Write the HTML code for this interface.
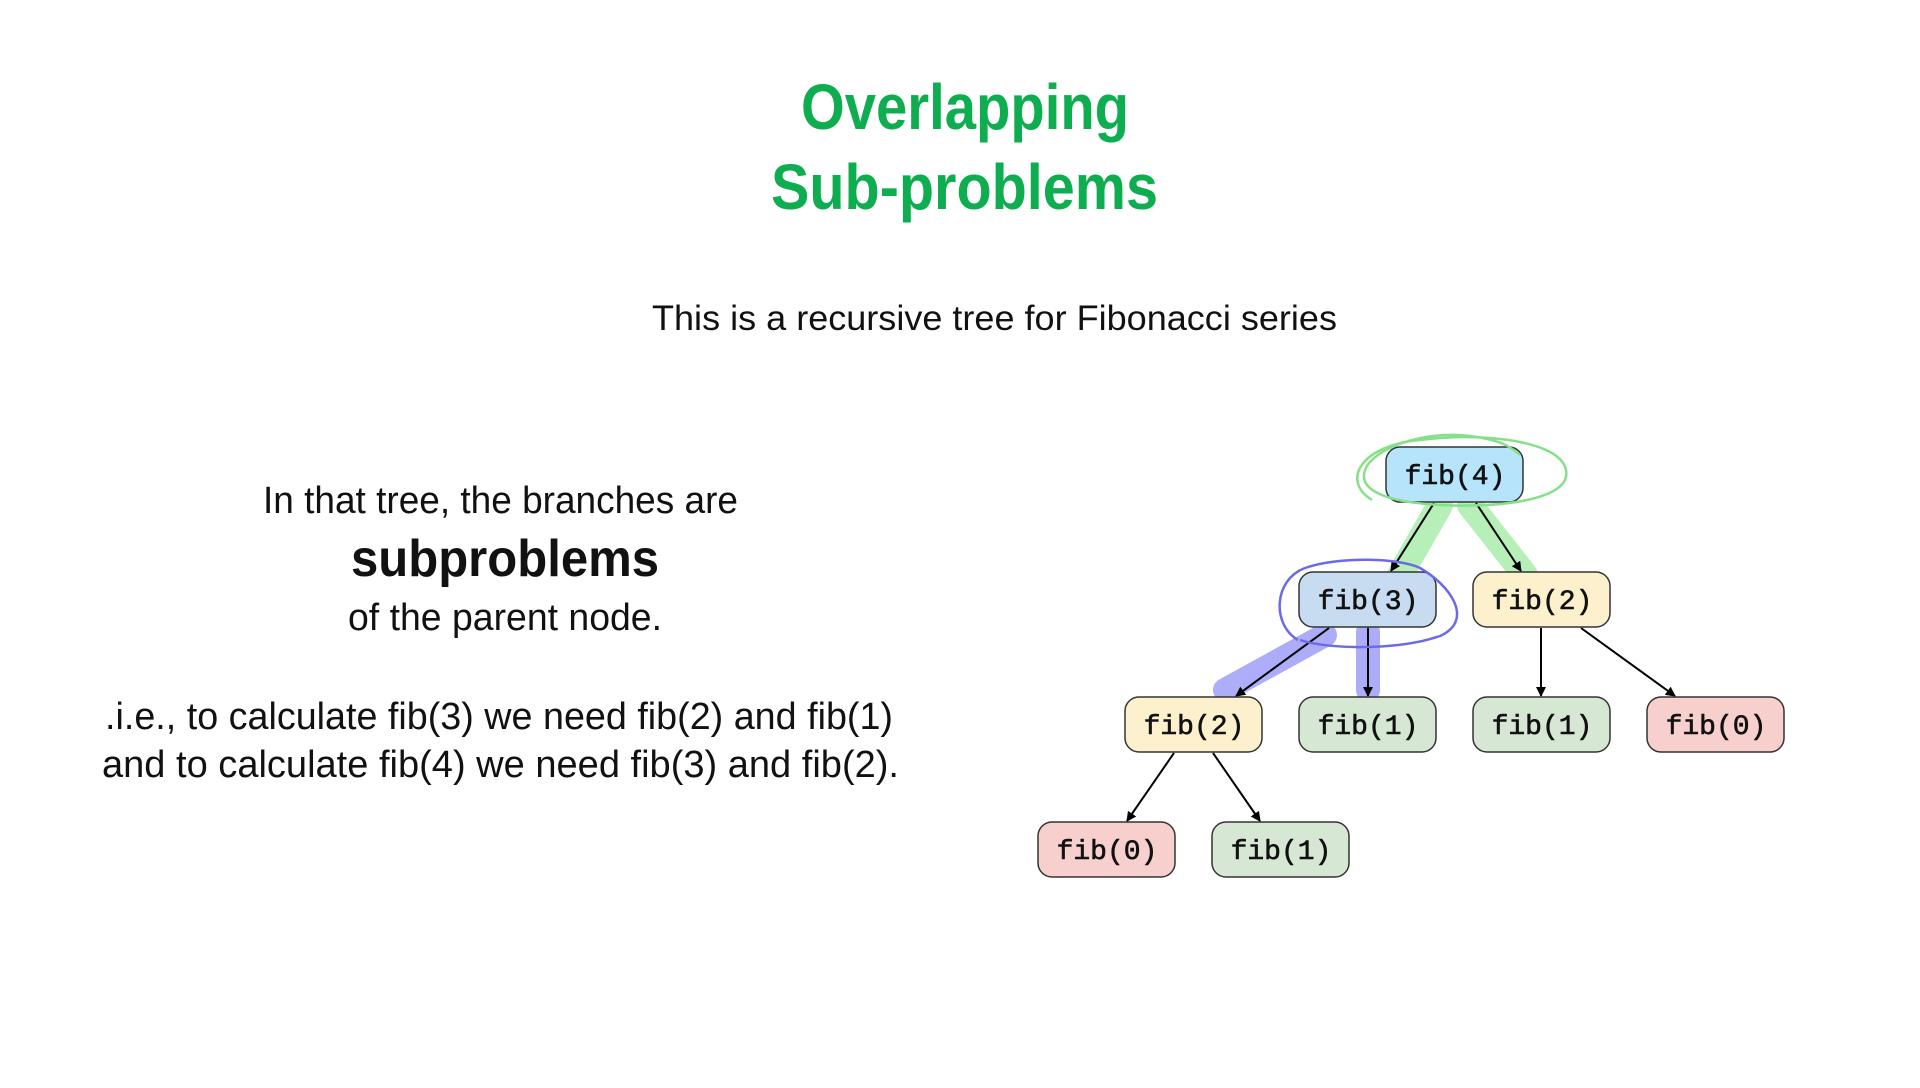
<!DOCTYPE html>
<html><head><meta charset="utf-8"><style>html,body{margin:0;padding:0;background:#fff;width:1920px;height:1088px;overflow:hidden}</style></head>
<body>
<svg width="1920" height="1088" viewBox="0 0 1920 1088" xmlns="http://www.w3.org/2000/svg">
<rect width="1920" height="1088" fill="#fff"/>
<g font-family="Liberation Sans, sans-serif" text-anchor="start">
<text x="801" y="129" font-size="64" font-weight="bold" fill="#0ead4f" textLength="328" lengthAdjust="spacingAndGlyphs">Overlapping</text>
<text x="771" y="209" font-size="64" font-weight="bold" fill="#0ead4f" textLength="387" lengthAdjust="spacingAndGlyphs">Sub-problems</text>
<text x="652" y="330" font-size="35" fill="#111" textLength="685" lengthAdjust="spacingAndGlyphs">This is a recursive tree for Fibonacci series</text>
<text x="263" y="513" font-size="38" fill="#111" textLength="475" lengthAdjust="spacingAndGlyphs">In that tree, the branches are</text>
<text x="351" y="576" font-size="52" font-weight="bold" fill="#111" textLength="308" lengthAdjust="spacingAndGlyphs">subproblems</text>
<text x="348" y="630" font-size="38" fill="#111" textLength="314" lengthAdjust="spacingAndGlyphs">of the parent node.</text>
<text x="105" y="729" font-size="38" fill="#111" textLength="788" lengthAdjust="spacingAndGlyphs">.i.e., to calculate fib(3) we need fib(2) and fib(1)</text>
<text x="102" y="777" font-size="38" fill="#111" textLength="797" lengthAdjust="spacingAndGlyphs">and to calculate fib(4) we need fib(3) and fib(2).</text>
</g>
<g stroke-linecap="round" fill="none" opacity="0.55">
<path d="M1440 505 L1400 575" stroke="#7be27f" stroke-width="26"/>
<path d="M1470 505 L1525 575" stroke="#7be27f" stroke-width="26"/>
<path d="M1325 635 L1225 690" stroke="#6a6af5" stroke-width="24"/>
<path d="M1368 632 L1368 690" stroke="#6a6af5" stroke-width="24"/>
</g>
<defs><marker id="a" markerWidth="10" markerHeight="10" refX="9" refY="5" orient="auto" markerUnits="userSpaceOnUse"><path d="M0 0 L10 5 L0 10 z" fill="#000"/></marker></defs>
<g stroke="#000" stroke-width="2" marker-end="url(#a)">
<line x1="1434" y1="503" x2="1391" y2="571"/>
<line x1="1476" y1="503" x2="1521" y2="571"/>
<line x1="1329" y1="628" x2="1236" y2="696"/>
<line x1="1368" y1="628" x2="1368" y2="696"/>
<line x1="1541" y1="628" x2="1541" y2="696"/>
<line x1="1581" y1="628" x2="1675" y2="696"/>
<line x1="1174" y1="753" x2="1127" y2="821"/>
<line x1="1213" y1="753" x2="1260" y2="821"/>
</g>
<g stroke="#333" stroke-width="1.5" font-family="Liberation Mono, monospace" font-size="28" text-anchor="middle">
<rect x="1386" y="447" width="137" height="55" rx="14" fill="#b5e4fb"/>
<rect x="1299" y="572" width="137" height="55" rx="14" fill="#c7dcf1"/>
<rect x="1473" y="572" width="137" height="55" rx="14" fill="#fdf1cd"/>
<rect x="1125" y="697" width="137" height="55" rx="14" fill="#fdf1cd"/>
<rect x="1299" y="697" width="137" height="55" rx="14" fill="#d6e7d4"/>
<rect x="1473" y="697" width="137" height="55" rx="14" fill="#d6e7d4"/>
<rect x="1647" y="697" width="137" height="55" rx="14" fill="#f7cfcd"/>
<rect x="1038" y="822" width="137" height="55" rx="14" fill="#f7cfcd"/>
<rect x="1212" y="822" width="137" height="55" rx="14" fill="#d6e7d4"/>
<g stroke="#111" stroke-width="0.6" fill="#111">
<text x="1455" y="484">fib(4)</text>
<text x="1368" y="609">fib(3)</text>
<text x="1542" y="609">fib(2)</text>
<text x="1194" y="734">fib(2)</text>
<text x="1368" y="734">fib(1)</text>
<text x="1542" y="734">fib(1)</text>
<text x="1716" y="734">fib(0)</text>
<text x="1107" y="859">fib(0)</text>
<text x="1281" y="859">fib(1)</text>
</g>
</g>
<g fill="none" stroke-width="2.5">
<path d="M1372 500 C1340 480 1362 445 1420 440 C1480 432 1560 440 1566 470 C1572 500 1500 508 1440 505 C1385 502 1358 490 1365 470 C1372 450 1420 430 1470 436 C1500 440 1510 446 1520 455" stroke="#86e08a"/>
<path d="M1298 640 C1272 625 1273 580 1305 568 C1340 556 1400 558 1420 568 C1450 585 1475 620 1440 636 C1400 650 1330 650 1300 640" stroke="#6b6be8"/>
</g>
</svg>
</body></html>
